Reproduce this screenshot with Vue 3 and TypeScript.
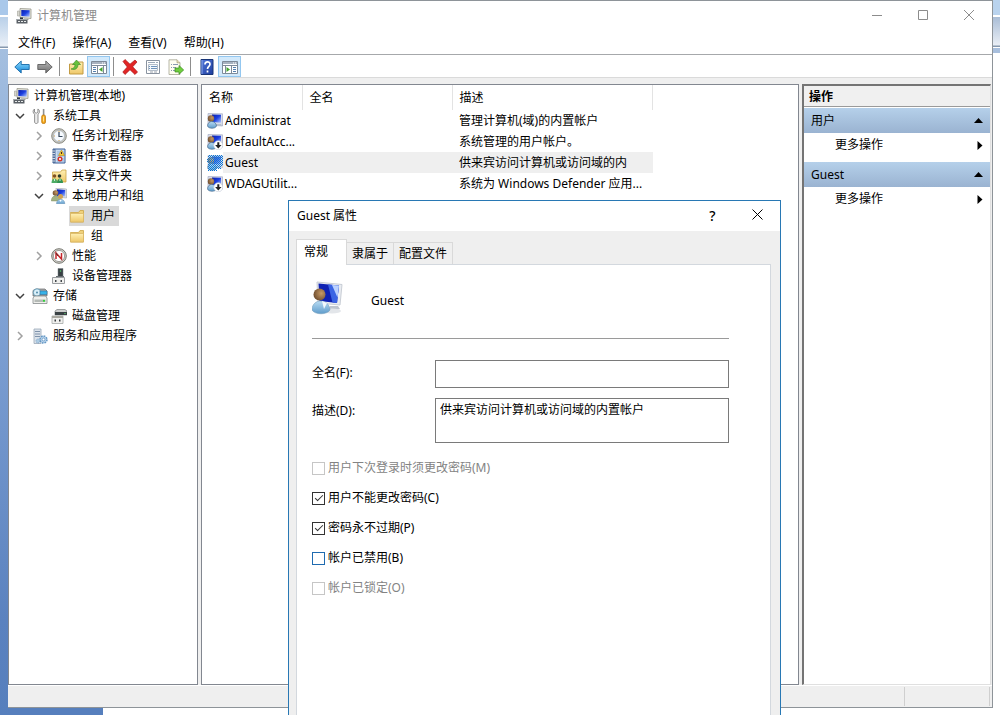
<script setup lang="ts">
import { ref } from 'vue'

interface TreeNode {
  label: string
  icon: string
  level: number
  state?: 'open' | 'closed'
  selected?: boolean
}

interface Account {
  name: string
  fullName: string
  description: string
  icon: string
  selected?: boolean
}

interface Option {
  id: string
  label: string
  checked: boolean
  disabled?: boolean
  hot?: boolean
}

const menus = ['文件(F)', '操作(A)', '查看(V)', '帮助(H)']

const toolbar = [
  [
    { icon: 'back', label: '后退' },
    { icon: 'forward', label: '前进' },
  ],
  [
    { icon: 'up', label: '向上一级' },
    { icon: 'pane-left', label: '显示/隐藏控制台树', active: true },
  ],
  [
    { icon: 'delete', label: '删除' },
    { icon: 'props', label: '属性' },
    { icon: 'export', label: '导出列表' },
  ],
  [
    { icon: 'help', label: '帮助' },
    { icon: 'pane-right', label: '显示/隐藏操作窗格', active: true },
  ],
]

const tree: TreeNode[] = [
  { label: '计算机管理(本地)', icon: 'computer', level: 0 },
  { label: '系统工具', icon: 'tools', level: 1, state: 'open' },
  { label: '任务计划程序', icon: 'clock', level: 2, state: 'closed' },
  { label: '事件查看器', icon: 'events', level: 2, state: 'closed' },
  { label: '共享文件夹', icon: 'shared', level: 2, state: 'closed' },
  { label: '本地用户和组', icon: 'users', level: 2, state: 'open' },
  { label: '用户', icon: 'folder', level: 3, selected: true },
  { label: '组', icon: 'folder', level: 3 },
  { label: '性能', icon: 'perf', level: 2, state: 'closed' },
  { label: '设备管理器', icon: 'device', level: 2 },
  { label: '存储', icon: 'storage', level: 1, state: 'open' },
  { label: '磁盘管理', icon: 'disk', level: 2 },
  { label: '服务和应用程序', icon: 'services', level: 1, state: 'closed' },
]

const accounts: Account[] = [
  { name: 'Administrat', fullName: '', description: '管理计算机(域)的内置帐户', icon: 'user' },
  { name: 'DefaultAcc...', fullName: '', description: '系统管理的用户帐户。', icon: 'user-off' },
  { name: 'Guest', fullName: '', description: '供来宾访问计算机或访问域的内', icon: 'user-sel', selected: true },
  { name: 'WDAGUtilit...', fullName: '', description: '系统为 Windows Defender 应用...', icon: 'user-off' },
]

const actionGroups = ['用户', 'Guest']
const tabs = ['常规', '隶属于', '配置文件']
const activeTab = ref('常规')

const fullName = ref('')
const description = ref('供来宾访问计算机或访问域的内置帐户')
const options = ref<Option[]>([
  { id: 'must-change', label: '用户下次登录时须更改密码(M)', checked: false, disabled: true },
  { id: 'no-change', label: '用户不能更改密码(C)', checked: true },
  { id: 'never-expire', label: '密码永不过期(P)', checked: true },
  { id: 'disabled', label: '帐户已禁用(B)', checked: false, hot: true },
  { id: 'locked', label: '帐户已锁定(O)', checked: false, disabled: true },
])
</script>

<template>
  <svg class="defs" aria-hidden="true">
    <defs>
      <linearGradient id="g-screen" x1="0" y1="0" x2="1" y2="1">
        <stop offset="0" stop-color="#0a1ea8" /><stop offset=".5" stop-color="#1c3fe0" /><stop offset="1" stop-color="#b4ccff" />
      </linearGradient>
      <linearGradient id="g-back" x1="0" y1="0" x2="0" y2="1">
        <stop offset="0" stop-color="#8fdcff" /><stop offset="1" stop-color="#0f83d6" />
      </linearGradient>
      <linearGradient id="g-fwd" x1="0" y1="0" x2="0" y2="1">
        <stop offset="0" stop-color="#b9b9b9" /><stop offset="1" stop-color="#6c6c6c" />
      </linearGradient>
      <linearGradient id="g-folder" x1="0" y1="0" x2="0" y2="1">
        <stop offset="0" stop-color="#fff0b4" /><stop offset="1" stop-color="#eec768" />
      </linearGradient>
      <linearGradient id="g-help" x1="0" y1="0" x2="1" y2="1">
        <stop offset="0" stop-color="#5378dc" /><stop offset="1" stop-color="#1c3c9c" />
      </linearGradient>
      <linearGradient id="g-body" x1="0" y1="0" x2="0" y2="1">
        <stop offset="0" stop-color="#b9dcf3" /><stop offset="1" stop-color="#5f9ccb" />
      </linearGradient>
      <radialGradient id="g-head" cx=".65" cy=".4" r=".7">
        <stop offset="0" stop-color="#c79a66" /><stop offset="1" stop-color="#6b4a2c" />
      </radialGradient>
      <pattern id="p-dither" width="2" height="2" patternUnits="userSpaceOnUse">
        <path d="M0 0h1v1h-1zM1 1h1v1h-1z" fill="#0878d8" />
      </pattern>
    </defs>

    <symbol id="i-computer" viewBox="0 0 16 16">
      <path d="M4 .5 15 1v9.500L4 9.500z" fill="#e4e4dc" stroke="#98988c" stroke-width=".8" />
      <path d="m5.300 2 8.400.3v6.500l-8.400-.7z" fill="url(#g-screen)" />
      <path d="M8 10.200h4l1 1.800H8z" fill="#babab0" />
      <path d="M1.500 3h2v5h-2z" fill="#d7d7cf" stroke="#a2a29a" stroke-width=".6" />
      <path d="M.5 11h11v4.500H.5z" fill="#5a6066" /><path d="M.5 11h11v1H.5z" fill="#9fa6aa" />
      <path d="M2 13h2v1H2zM5 13h2v1H5zM8 13h2v1H8z" fill="#e7eaea" />
      <path d="M4 9.500h3V11H4z" fill="#31363c" />
    </symbol>
    <symbol id="i-tools" viewBox="0 0 16 16">
      <path d="M2.500 1v3.200l1.700 1 1.700-1V1C8 2 8 4.800 6 6.200V14c0 2-3.400 2-3.400 0V6.200C.6 5 .6 2.200 2.500 1z" fill="#ececec" stroke="#777" stroke-width=".8" />
      <path d="M10.800 1h1.600v6h-1.600z" fill="#909090" /><rect x="9.700" y="7" width="3.800" height="8.500" rx="1.500" fill="#f3a51b" stroke="#b87309" stroke-width=".7" />
      <path d="M11.500 8.500v5" stroke="#ffe291" />
    </symbol>
    <symbol id="i-clock" viewBox="0 0 16 16">
      <circle cx="8" cy="8" r="7.300" fill="#c7c7c0" stroke="#8c8c84" stroke-width="1" />
      <circle cx="8" cy="8" r="5.500" fill="#f7fbff" stroke="#a3aab0" stroke-width=".7" />
      <path d="M8 4v4.500h3.500" fill="none" stroke="#36485c" stroke-width="1.200" />
      <path d="M8 3v1M8 12v1M3 8h1" stroke="#c89b4d" />
    </symbol>
    <symbol id="i-events" viewBox="0 0 16 16">
      <path d="M2 1h12v14H2z" fill="#c9dcf1" stroke="#3b5e96" />
      <path d="M2 1h2.500v14H2z" fill="#526f9c" /><path d="M1 3h3M1 5.500h3M1 8h3M1 10.500h3M1 13h3" stroke="#d0d7e1" />
      <path d="M6 4h7M6 6h7M6 8h7M6 11h7M6 13h7" stroke="#79a0ce" stroke-width=".7" />
      <path d="m10.500 2 3 5.500h-6z" fill="#f6ca32" stroke="#b68608" stroke-width=".5" /><path d="M10.500 4v2" stroke="#422" />
      <circle cx="9" cy="11" r="2.500" fill="#d83226" /><path d="m8 10 2 2m0-2-2 2" stroke="#fff" stroke-width=".8" />
    </symbol>
    <symbol id="i-folder" viewBox="0 0 16 16">
      <path d="M1.500 4.500h8l1.500-2h3.500v11.500h-13z" fill="#efd17b" stroke="#cda646" stroke-width=".8" />
      <path d="M1.500 5.500h13V14h-13z" fill="url(#g-folder)" stroke="#d9b868" stroke-width=".8" />
    </symbol>
    <symbol id="i-shared" viewBox="0 0 16 16">
      <path d="M1.500 4h8l1.500-2H15v12H1.500z" fill="url(#g-folder)" stroke="#cba546" stroke-width=".8" />
      <circle cx="3.500" cy="8" r="1.800" fill="#805124" /><circle cx="8.500" cy="8" r="1.800" fill="#303c2d" />
      <path d="M.5 15c0-6 6-6 6 0z" fill="#4dac66" /><path d="M6 15c0-6 6-6 6 0z" fill="#329453" />
      <path d="M3.500 11v2M9 11v2" stroke="#cfeed4" />
    </symbol>
    <symbol id="i-users" viewBox="0 0 16 16">
      <path d="m5 0 10.500 1v9L5 9z" fill="#dddfe3" stroke="#a0a6ae" stroke-width=".6" /><path d="m6 1.300 8.200.8v6.500L6 8z" fill="url(#g-screen)" />
      <circle cx="4.500" cy="5" r="2.800" fill="url(#g-head)" /><path d="M.3 13c0-7 8.700-7 8.700 0z" fill="#a3b284" stroke="#70824f" stroke-width=".4" />
      <circle cx="9.500" cy="8.500" r="2.500" fill="#cfa253" /><path d="M5.500 15.800c0-6 8.300-6 8.300 0z" fill="url(#g-body)" stroke="#618baf" stroke-width=".5" />
      <path d="m8.500 12 1 2 1-2" fill="#fff" />
    </symbol>
    <symbol id="i-perf" viewBox="0 0 16 16">
      <circle cx="8" cy="8" r="7.300" fill="#d1d1ca" stroke="#777770" /><circle cx="8" cy="8" r="5.600" fill="#fff" stroke="#8c8c88" stroke-width=".8" />
      <path d="M5 11V5l5.500 6V5" fill="none" stroke="#c5282d" stroke-width="1.500" /><path d="m5 5 2 3" stroke="#563331" />
    </symbol>
    <symbol id="i-device" viewBox="0 0 16 16">
      <path d="M7 .5h5v8.500H7z" fill="#394044" stroke="#777e81" stroke-width=".5" /><circle cx="9.500" cy="3" r=".8" fill="#58d071" />
      <path d="M5 8h8v3H5z" fill="#686e72" /><path d="M1.500 9.500h12v6h-12z" fill="#f0f0ee" stroke="#9a9da0" />
      <path d="M4 12h1.500v2H4zM9.500 12H11v2H9.500z" fill="#43484c" />
    </symbol>
    <symbol id="i-storage" viewBox="0 0 16 16">
      <path d="M1 2.500 4 1h9l2 2v5H1z" fill="#a9aaa9" stroke="#65696b" stroke-width=".7" /><circle cx="5" cy="4.500" r="3.700" fill="#d9eff8" stroke="#518ca9" stroke-width=".8" /><circle cx="5" cy="4.500" r="1" fill="#528ba8" />
      <path d="M8 3h7v3.500H8z" fill="#37b3e8" stroke="#3171a0" stroke-width=".6" />
      <path d="m1 10 1.500-2h11l1.500 2v5.500H1z" fill="#efefec" stroke="#858a8c" stroke-width=".8" /><path d="M2.500 11.500h11v2.500h-11z" fill="#b5bab6" /><circle cx="12" cy="12.800" r="1.100" fill="#2bd336" />
    </symbol>
    <symbol id="i-disk" viewBox="0 0 16 16">
      <path d="m4 3 2-1.500h8L16 3v4H4z" fill="#cdcecd" stroke="#6a6e6e" stroke-width=".6" /><path d="M4 4h12v3H4z" fill="#3a4144" /><path d="M13.500 5h1v1h-1z" fill="#6df07e" />
      <path d="M1 8h11v7.500H1z" fill="#f0f0ee" stroke="#a5a8a7" stroke-width=".8" /><path d="M1 8h11v2H1z" fill="#a9a8a0" /><path d="M3.500 11.500H5v2H3.500zM8 11.500h1.500v2H8z" fill="#363b3f" />
    </symbol>
    <symbol id="i-services" viewBox="0 0 16 16">
      <path d="M2 1h7v14.500H2z" fill="#dce3eb" stroke="#9aa8b8" stroke-width=".8" /><path d="M3 3.500h5M3 6h5M3 8.500h5" stroke="#7e92aa" />
      <circle cx="11.500" cy="11.500" r="3.500" fill="#b5d1ea" stroke="#6497c4" stroke-width="1.500" stroke-dasharray="1.700 1" /><circle cx="11.500" cy="11.500" r="1.400" fill="#fff" stroke="#6497c4" stroke-width=".8" />
      <circle cx="6" cy="13" r="2" fill="#aecce3" stroke="#6794bb" stroke-width=".8" stroke-dasharray="1 1" />
    </symbol>

    <symbol id="i-user" viewBox="0 0 16 16">
      <path d="m1 .5 14.500.3v12.200L1 12z" fill="#d9deeb" stroke="#a7aec4" stroke-width=".7" />
      <path d="m5 1.500 9 .3v8L5 9z" fill="url(#g-screen)" /><path d="M8 11h6l1 2H8z" fill="#b6bfce" />
      <circle cx="4" cy="5.500" r="3.200" fill="url(#g-head)" /><path d="M.5 13c0-6 8.500-6 9 0-1 3-8 3-9 0z" fill="url(#g-body)" stroke="#395a80" stroke-width=".6" />
    </symbol>
    <symbol id="i-user-off" viewBox="0 0 16 16">
      <use href="#i-user" width="16" height="16" /><circle cx="11.300" cy="11.300" r="4.500" fill="#fff" stroke="#c3cad6" stroke-width=".6" />
      <path d="M10.300 8.300h2v2.700h2.200l-3.200 3.500L8.100 11h2.200z" fill="#222" />
    </symbol>
    <symbol id="i-user-sel" viewBox="0 0 16 16">
      <use href="#i-user" width="16" height="16" opacity=".75" /><path d="M2 0h14v11h-2v3h-4v2H1V9l-1-3z" fill="url(#p-dither)" shape-rendering="crispEdges" />
    </symbol>
    <symbol id="i-portrait" viewBox="0 0 32 34">
      <path d="M18 25h8l2 3-12 3z" fill="#bfc5ce" /><ellipse cx="20" cy="30" rx="9" ry="2.500" fill="#e3e6ea" />
      <path d="m5 1 25 2.500L28 24 6 22z" fill="#e9ecf1" stroke="#c9ced6" /><path d="m6.500 2.500 20.500 2-2 17.500L7.500 20z" fill="#1022b3" />
      <path d="m16 3.500 11 1-2 17.500-4.500-.4z" fill="#3a64e4" /><path d="m20 4 7 .5-1.500 12z" fill="#bad1ff" />
      <circle cx="7.500" cy="13.500" r="6" fill="url(#g-head)" /><path d="M0 29c0-12 17-12 18 0-3 5-15 5-18 0z" fill="url(#g-body)" stroke="#759fbe" stroke-width=".6" />
      <path d="m10 20 2 8 3-6z" fill="#f2f9fd" />
    </symbol>

    <symbol id="i-back" viewBox="0 0 16 16"><path d="m.8 8 6.400-6v3.500h8v5h-8V14z" fill="url(#g-back)" stroke="#1769a7" stroke-width=".9" stroke-linejoin="round" /></symbol>
    <symbol id="i-forward" viewBox="0 0 16 16"><path d="M15.200 8 8.800 2v3.500h-8v5h8V14z" fill="url(#g-fwd)" stroke="#5e5e5e" stroke-width=".9" stroke-linejoin="round" /></symbol>
    <symbol id="i-up" viewBox="0 0 16 16">
      <path d="M1.500 5h7L10 3h5v12H1.500z" fill="url(#g-folder)" stroke="#c29b43" />
      <path d="M3 10C6 9.500 7 8 7 5.500H4.500L8.500 1l4 4.500H10c0 4-3 6-7 4.500z" fill="#66c13b" stroke="#338721" stroke-width=".6" />
    </symbol>
    <symbol id="i-pane-left" viewBox="0 0 16 16">
      <path d="M.5 2.500h15v12H.5z" fill="#fff" stroke="#7d8a99" /><path d="M1 3h14v2H1z" fill="#a7b2c0" /><path d="M11 4h1M13 4h1" stroke="#fff" /><path d="M1 6.500h14M6.500 7v7M12.500 7v7" stroke="#7d8a99" />
      <path d="M2 8.500h3M2 10.500h3M2 12.500h3" stroke="#557fae" /><path d="M11.500 8v5L8 10.500z" fill="#42a42c" />
    </symbol>
    <symbol id="i-pane-right" viewBox="0 0 16 16">
      <path d="M.5 2.500h15v12H.5z" fill="#fff" stroke="#7d8a99" /><path d="M1 3h14v2H1z" fill="#a7b2c0" /><path d="M11 4h1M13 4h1" stroke="#fff" /><path d="M1 6.500h14M3.500 7v7M9.500 7v7" stroke="#7d8a99" />
      <path d="M11 8.500h3M11 10.500h3M11 12.500h3" stroke="#557fae" /><path d="M4.500 8v5L8 10.500z" fill="#42a42c" />
    </symbol>
    <symbol id="i-delete" viewBox="0 0 16 16"><path d="m1 2.500 2-2 5 4.700L13 1l2 2-4.300 4.800 4.800 5.200-2.500 2.500L8 10.700 3 15.500.8 13l4.500-5z" fill="#e12525" stroke="#a91919" stroke-width=".7" /></symbol>
    <symbol id="i-props" viewBox="0 0 16 16">
      <path d="M1.500 1.500h13v13h-13z" fill="#fff" stroke="#8993a0" /><path d="M3 3.500h7M11 3.500h2" stroke="#9eabba" />
      <path d="M3.500 5.500h9v6h-9z" fill="#f4f8fc" stroke="#b3bdc9" />
      <path d="M4 7.500h1M4 9.500h1M6 7.500h6M6 9.500h6" stroke="#6f93bb" /><path d="M5 13h3M9 13h3" stroke="#9aa2ad" />
    </symbol>
    <symbol id="i-export" viewBox="0 0 16 16">
      <path d="M1 .8h8l3 3v11.700H1z" fill="#fffef1" stroke="#a5a592" stroke-width=".8" /><path d="M9 .8v3h3" fill="#eee3bb" stroke="#998e69" stroke-width=".6" />
      <path d="M3 5.500h1M3 8.500h1M3 11.500h1M5 5.500h5M5 8.500h3M5 11.500h2" stroke="#8a9ab0" />
      <path d="M7 9h4V6.500l4.700 4.500-4.700 4.200V13H7z" fill="#70ce3f" stroke="#388b1e" stroke-width=".7" />
    </symbol>
    <symbol id="i-help" viewBox="0 0 16 16">
      <path d="M2 .5h12v15H2z" fill="url(#g-help)" stroke="#183577" /><path d="M3 1v14" stroke="#8aa6eb" />
      <path d="M6 5.500C6 2 11 2 11 5.300c0 2-2.500 2.200-2.500 4.700M8.500 11.500v2" fill="none" stroke="#fff" stroke-width="1.700" />
    </symbol>
  </svg>

  <div class="desktop">
    <main class="console">
      <header class="titlebar">
        <svg class="icon"><use href="#i-computer" /></svg>
        <h1>计算机管理</h1>
        <button type="button" aria-label="最小化"><svg viewBox="0 0 10 10"><path d="M0 5.500h10" /></svg></button>
        <button type="button" aria-label="最大化"><svg viewBox="0 0 10 10"><path d="M.5.5h9v9h-9z" /></svg></button>
        <button type="button" aria-label="关闭"><svg viewBox="0 0 10 10"><path d="m0 0 10 10M10 0 0 10" /></svg></button>
      </header>
      <nav class="menubar">
        <button v-for="m in menus" :key="m" type="button">{{ m }}</button>
      </nav>
      <div class="toolbar" role="toolbar">
        <div v-for="(group, i) in toolbar" :key="i" class="tool-group">
          <button v-for="t in group" :key="t.icon" type="button" :class="{ active: t.active }" :aria-label="t.label">
            <svg class="icon"><use :href="'#i-' + t.icon" /></svg>
          </button>
        </div>
      </div>

      <div class="panes">
        <ul class="tree pane" role="tree">
          <li v-for="n in tree" :key="n.label" :class="'level-' + n.level" role="treeitem">
            <svg v-if="n.level > 0" class="chevron" :class="n.state" viewBox="0 0 10 10">
              <path v-if="n.state === 'open'" d="m1 3 4 4 4-4" />
              <path v-else-if="n.state === 'closed'" d="m3 1 4 4-4 4" />
            </svg>
            <span class="node" :class="{ selected: n.selected }">
              <svg class="icon"><use :href="'#i-' + n.icon" /></svg>
              <span>{{ n.label }}</span>
            </span>
          </li>
        </ul>

        <section class="list pane">
          <table>
            <colgroup><col class="c-name" /><col class="c-full" /><col class="c-desc" /></colgroup>
            <thead>
              <tr><th>名称</th><th>全名</th><th>描述</th></tr>
            </thead>
            <tbody>
              <tr v-for="a in accounts" :key="a.name" :class="{ selected: a.selected }">
                <td><span class="account"><svg class="icon"><use :href="'#i-' + a.icon" /></svg><span>{{ a.name }}</span></span></td>
                <td>{{ a.fullName }}</td>
                <td>{{ a.description }}</td>
              </tr>
            </tbody>
          </table>
        </section>

        <aside class="actions">
          <h2>操作</h2>
          <section v-for="g in actionGroups" :key="g">
            <button type="button" class="group">
              <span>{{ g }}</span><svg viewBox="0 0 9 5"><path d="M4.500 0 9 5H0z" /></svg>
            </button>
            <button type="button" class="more">
              <span>更多操作</span><svg viewBox="0 0 5 9"><path d="m0 0 5 4.500L0 9z" /></svg>
            </button>
          </section>
        </aside>
      </div>
      <footer class="statusbar"><span></span><span></span></footer>
    </main>

    <form class="dialog" role="dialog" aria-labelledby="dialog-title" @submit.prevent>
      <header class="dialog-title">
        <h2 id="dialog-title">Guest 属性</h2>
        <button type="button" aria-label="帮助" class="ask">?</button>
        <button type="button" aria-label="关闭"><svg viewBox="0 0 11 11"><path d="m.5.5 10 10m0-10-10 10" /></svg></button>
      </header>
      <div class="dialog-body">
        <div class="tabs" role="tablist">
          <button v-for="t in tabs" :key="t" type="button" role="tab" :aria-selected="activeTab === t" :class="{ current: activeTab === t }" @click="activeTab = t">{{ t }}</button>
        </div>
        <div class="sheet" role="tabpanel">
          <div class="identity">
            <svg class="portrait"><use href="#i-portrait" /></svg>
            <span>Guest</span>
          </div>
          <div class="fields">
            <label for="full-name">全名(F):</label>
            <input id="full-name" v-model="fullName" type="text" />
            <label for="description">描述(D):</label>
            <textarea id="description" v-model="description"></textarea>
          </div>
          <div class="options">
            <label v-for="o in options" :key="o.id" :class="{ off: o.disabled, hot: o.hot }" :for="o.id">
              <input :id="o.id" v-model="o.checked" type="checkbox" :disabled="o.disabled" />
              <span>{{ o.label }}</span>
            </label>
          </div>
        </div>
      </div>
    </form>
  </div>
</template>

<style>
body {
  margin: 0;
}
</style>

<style scoped>
* {
  box-sizing: border-box;
}

.defs {
  position: absolute;
  width: 0;
  height: 0;
}

.desktop {
  position: relative;
  display: flex;
  height: 100vh;
  overflow: hidden;
  padding: 0 7px 7px 8px;
  font: 12px/16px "Noto Sans", "Noto Sans CJK SC", sans-serif;
  color: #000;
  background:
    linear-gradient(#a9c8ea 0 15px, #fff 15px 17px, #b9d0e9 17px, #eaf0f7 46px, #8799ae 47px 48px, #fff 48px 49px, #a4bfdf 49px, #8fafdc 180px, #5b82bf 620px, #567fbd) 0 0 / 8px 100% no-repeat,
    linear-gradient(#b9d3ee 0 15px, #fff 15px 17px, #a9bdd6 17px, #e9eef5 45px, #8799ae 46px 47px, #fff 47px 48px, #a8bfdd 48px 53px, #fff 53px) 100% 0 / 8px 100% no-repeat,
    linear-gradient(#567fbd, #567fbd) 0 100% / 103px 8px no-repeat,
    #fff;
}

button {
  padding: 0;
  border: 0;
  background: none;
  font: inherit;
  color: inherit;
}

h1,
h2 {
  margin: 0;
  font: inherit;
}

.icon {
  flex: none;
  display: block;
  width: 16px;
  height: 16px;
}

/* Console window */
.console {
  flex: 1;
  min-width: 0;
  display: flex;
  flex-direction: column;
  border: 1px solid #8e9499;
  border-left: 0;
  background: #efefef;
}

.titlebar {
  display: flex;
  align-items: center;
  height: 30px;
  padding-left: 8px;
  background: #fff;
  color: #8b8b8b;
}

.titlebar h1 {
  flex: 1;
  margin-left: 5px;
}

.titlebar button {
  width: 46px;
  height: 30px;
}

.titlebar button svg {
  width: 10px;
  height: 10px;
  fill: none;
  stroke: #8c8c8c;
}

.menubar {
  display: flex;
  gap: 1px;
  height: 24px;
  padding-left: 2px;
  border-bottom: 1px solid #a6a8ab;
  background: #fff;
}

.menubar button {
  padding: 0 8px;
}

.toolbar {
  display: flex;
  height: 23px;
  padding: 1px 0 0 2px;
  border-bottom: 1px solid #dadada;
  background: #fff;
}

.tool-group {
  display: flex;
}

.tool-group + .tool-group {
  margin-left: 3px;
  padding-left: 4px;
  border-left: 1px solid #8d8d8d;
  border-image: linear-gradient(#fff 2px, #8d8d8d 2px 19px, #fff 19px) 1;
}

.tool-group button {
  display: flex;
  align-items: center;
  justify-content: center;
  width: 23px;
  height: 21px;
}

.tool-group button.active {
  border: 1px solid #93c7f0;
  background: #d2e9fb;
}

.panes {
  flex: 1;
  min-height: 0;
  display: flex;
  gap: 3px;
  padding: 6px 1px 0 0;
}

.pane {
  border: 1px solid #828790;
  background: #fff;
}

.tree {
  flex: none;
  width: 190px;
  margin: 0;
  padding: 1px 0 0 4px;
  list-style: none;
}

.tree li {
  display: flex;
  align-items: center;
  height: 20px;
}

.level-1 {
  padding-left: 2px;
}

.level-2 {
  padding-left: 21px;
}

.level-3 {
  padding-left: 39px;
}

.chevron {
  flex: none;
  width: 10px;
  height: 10px;
  margin-right: 7px;
  fill: none;
  stroke: #a0a0a0;
  stroke-width: 1.5;
}

.chevron.open {
  stroke: #404040;
}

.node {
  display: flex;
  align-items: center;
  gap: 5px;
  height: 20px;
  padding-right: 4px;
}

.level-3 .node {
  gap: 6px;
}

.node.selected {
  background: #d9d9d9;
}

.list {
  flex: 1;
  min-width: 0;
  overflow: hidden;
}

table {
  width: 451px;
  table-layout: fixed;
  border-collapse: collapse;
}

.c-name {
  width: 100px;
}

.c-full {
  width: 150px;
}

th,
td {
  padding: 0 0 0 7px;
  overflow: hidden;
  text-align: left;
  font-weight: normal;
  white-space: nowrap;
}

th {
  height: 25px;
  border-right: 1px solid #e3e3e3;
}

td {
  height: 21px;
}

td:first-child {
  padding-left: 5px;
}

.account {
  display: flex;
  align-items: center;
}

.account span {
  flex: 1;
  padding-left: 2px;
  line-height: 21px;
}

.selected td,
.selected .account span {
  background: #efefef;
}

.selected td:first-child {
  background: none;
}

.actions {
  flex: none;
  width: 189px;
  border: 1px solid #e0e0e0;
  border-top: 2px solid #747474;
  border-left: 2px solid #747474;
  background: #fff;
}

.actions h2 {
  height: 21px;
  padding-left: 5px;
  border-bottom: 1px solid #9a9a9a;
  background: #f0f0f0;
  line-height: 22px;
  font-weight: bold;
}

.actions button {
  display: flex;
  align-items: center;
  justify-content: space-between;
  width: 100%;
}

.actions section {
  margin-top: 1px;
}

.actions section + section {
  margin-top: 5px;
}

.actions .group {
  height: 25px;
  padding: 0 7px;
  background: linear-gradient(#b5d0ea, #9ab3d1);
}

.group svg {
  width: 9px;
  height: 5px;
}

.actions .more {
  height: 24px;
  padding: 0 7px 0 31px;
}

.more svg {
  width: 6px;
  height: 9px;
}

.statusbar {
  display: flex;
  justify-content: flex-end;
  height: 22px;
  padding: 1px 2px 1px 0;
  border-top: 1px solid #fff;
}

.statusbar span {
  width: 85px;
  border-right: 1px solid #cfcfcf;
}

/* Properties dialog */
.dialog {
  position: absolute;
  left: 288px;
  top: 200px;
  width: 493px;
  height: 620px;
  display: flex;
  flex-direction: column;
  border: 1px solid #2878b4;
  background: #efefef;
}

.dialog-title {
  display: flex;
  align-items: center;
  height: 30px;
  padding-left: 8px;
  background: #fff;
}

.dialog-title h2 {
  flex: 1;
}

.dialog-title button {
  width: 45px;
  height: 30px;
}

.dialog-title .ask {
  font-size: 14px;
  font-weight: 500;
}

.dialog-title svg {
  width: 11px;
  height: 11px;
  fill: none;
  stroke: #000;
}

.dialog-body {
  flex: 1;
  display: flex;
  flex-direction: column;
  padding: 8px 9px 9px 7px;
}

.tabs {
  display: flex;
  align-items: flex-end;
  margin-bottom: -1px;
}

.tabs button {
  height: 23px;
  padding: 0 5px;
  border: 1px solid #d9d9d9;
  border-left: 0;
}

.tabs .current {
  z-index: 1;
  height: 26px;
  padding: 0 18px 2px 7px;
  border-left: 1px solid #d9d9d9;
  border-bottom: 0;
  background: #fff;
}

.sheet {
  flex: 1;
  padding: 16px 41px 16px 15px;
  border: 1px solid #d3d8de;
  background: #fff;
}

.identity {
  display: flex;
  align-items: flex-start;
  gap: 27px;
  height: 58px;
  border-bottom: 1px solid #9a9a9a;
}

.identity span {
  line-height: 40px;
}

.portrait {
  width: 32px;
  height: 34px;
}

.fields {
  display: grid;
  grid-template-columns: 123px 1fr;
  gap: 10px 0;
  margin-top: 21px;
}

.fields label {
  padding-top: 5px;
}

.fields input,
.fields textarea {
  display: block;
  width: 100%;
  margin: 0;
  padding: 3px 4px;
  border: 1px solid #7a7a7a;
  border-radius: 0;
  outline: 0;
  background: #fff;
  font: inherit;
  color: inherit;
  resize: none;
}

.fields input {
  height: 28px;
}

.fields textarea {
  height: 45px;
  overflow: hidden;
}

.options {
  margin-top: 10px;
}

.options label {
  display: flex;
  align-items: center;
  gap: 3px;
  height: 30px;
}

.options input {
  flex: none;
  appearance: none;
  display: grid;
  place-items: center;
  width: 13px;
  height: 13px;
  margin: 0;
  border: 1px solid #333;
  background: #fff;
}

.options input:checked::before {
  content: "";
  width: 7px;
  height: 3px;
  margin-bottom: 3px;
  border: solid #333;
  border-width: 0 0 1px 1px;
  rotate: -45deg;
}

.options .off {
  color: #838383;
}

.options .off input {
  border-color: #c6c6c6;
}

.options .hot input {
  border-color: #1f6bb0;
}
</style>
